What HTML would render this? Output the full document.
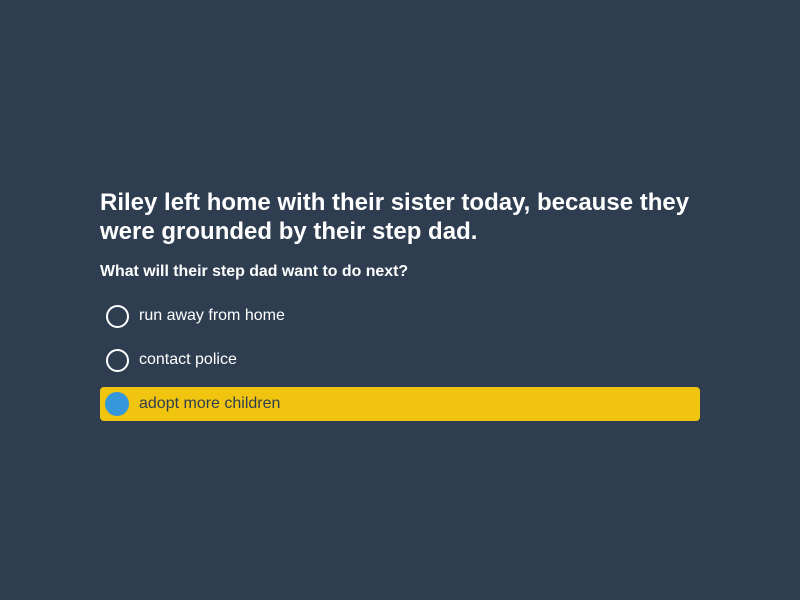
<!DOCTYPE html>
<html><head><style>
html,body{margin:0;width:800px;height:600px;background:#2e3e50;font-family:"Liberation Sans",sans-serif;overflow:hidden}
.wrap{position:absolute;left:100px;top:188px;width:600px}
h1{margin:0;color:#fff;font-size:24px;font-weight:bold;line-height:29px}
h2{margin:0;position:absolute;top:75px;color:#fff;font-size:15.9px;font-weight:bold}
.opt{position:absolute;left:0;width:600px;height:34px;border-radius:4px;color:#fff;font-size:16px}
.opt span{position:absolute;left:39px;top:8px}
.c{position:absolute;left:6px;top:6px;width:19px;height:19px;border:2px solid #fff;border-radius:50%}
.sel{background:#f1c40f;color:#2e3e50}
.sel .c{border:none;width:24px;height:24px;left:5px;top:5px;background:#3498db}
</style></head><body>
<div class="wrap">
<h1>Riley left home with their sister today, because they were grounded by their step dad.</h1>
<h2>What will their step dad want to do next?</h2>
<div class="opt" style="top:111px"><div class="c"></div><span>run away from home</span></div>
<div class="opt" style="top:155px"><div class="c"></div><span>contact police</span></div>
<div class="opt sel" style="top:199px"><div class="c"></div><span>adopt more children</span></div>
</div>
</body></html>
